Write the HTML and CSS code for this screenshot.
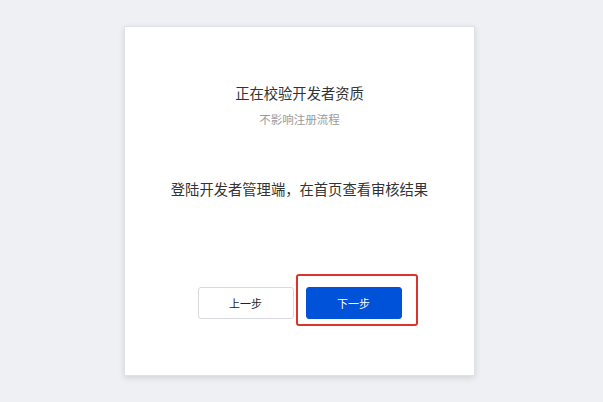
FILE: index.html
```html
<!DOCTYPE html>
<html lang="zh-CN">
<head>
<meta charset="utf-8">
<link rel="stylesheet" href="styles.css">
</head>
<body>
<div class="page">
  <div class="card">
    <div class="title">正在校验开发者资质</div>
    <div class="sub">不影响注册流程</div>
    <div class="main">登陆开发者管理端，在首页查看审核结果</div>
    <div class="actions">
      <button class="btn btn-default">上一步</button>
      <div class="highlight">
        <button class="btn btn-primary">下一步</button>
      </div>
    </div>
  </div>
</div>
</body>
</html>
```
FILE: styles.css
```css
html, body {
  margin: 0;
  padding: 0;
}
body {
  background: #eef0f4;
  font-family: "Noto Sans CJK SC", "Noto Sans", sans-serif;
  width: 603px;
  height: 402px;
  overflow: hidden;
}
.page {
  padding-top: 26px;
  padding-left: 124px;
}
.card {
  width: 351px;
  height: 350px;
  box-sizing: border-box;
  background: #fff;
  border: 1px solid #dfe1e6;
  box-shadow: 0 2px 6px rgba(0, 0, 0, 0.12);
  display: flex;
  flex-direction: column;
  align-items: center;
  padding-top: 56px;
}
.title {
  font-size: 14.3px;
  line-height: 20px;
  color: #333;
}
.sub {
  margin-top: 8px;
  font-size: 11.5px;
  line-height: 16px;
  color: #9a9a9a;
}
.main {
  margin-top: 52px;
  font-size: 14.3px;
  line-height: 20px;
  color: #333;
}
.actions {
  margin-top: 88px;
  display: flex;
  gap: 12px;
}
.btn {
  width: 96px;
  height: 32px;
  font-family: inherit;
  font-size: 11px;
  border-radius: 3px;
  padding: 0;
  cursor: pointer;
}
.btn-default {
  background: #fff;
  border: 1px solid #d7d9de;
  color: #222;
}
.btn-primary {
  background: #0052d9;
  border: 1px solid #0052d9;
  color: #fff;
  display: block;
}
.highlight {
  position: relative;
}
.highlight::after {
  content: "";
  position: absolute;
  left: -10px;
  right: -16px;
  top: -13px;
  bottom: -7px;
  border: 2px solid #d9352b;
  border-radius: 3px;
  pointer-events: none;
}
```
